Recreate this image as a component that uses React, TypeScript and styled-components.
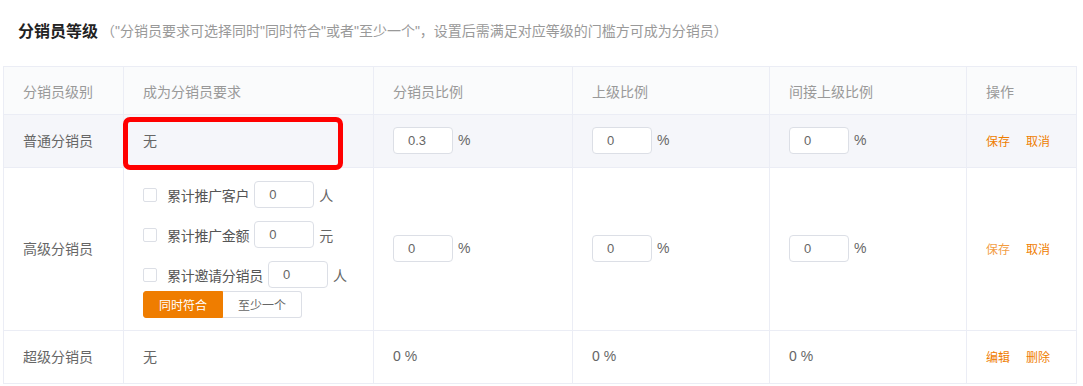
import styled, { createGlobalStyle } from 'styled-components'

const GlobalStyle = createGlobalStyle`
  body {
    margin: 0;
    background: #fff;
    font-family: "Liberation Sans", "Noto Sans CJK SC", sans-serif;
    color: #666;
  }
`

const ORANGE = '#ef7d00'

type Level = {
  name: string
  editing: boolean
  rate: string
  parent: string
  grand: string
  conditions?: { label: string; unit: string }[]
  saveDim?: boolean
}

const levels: Level[] = [
  { name: '普通分销员', editing: true, rate: '0.3', parent: '0', grand: '0' },
  {
    name: '高级分销员',
    editing: true,
    rate: '0',
    parent: '0',
    grand: '0',
    saveDim: true,
    conditions: [
      { label: '累计推广客户', unit: '人' },
      { label: '累计推广金额', unit: '元' },
      { label: '累计邀请分销员', unit: '人' },
    ],
  },
  { name: '超级分销员', editing: false, rate: '0', parent: '0', grand: '0' },
]

function Ratio({ value, editing }: { value: string; editing: boolean }) {
  if (!editing) return <span>{value} %</span>
  return (
    <RatioBox>
      <NumInput defaultValue={value} />
      <Unit>%</Unit>
    </RatioBox>
  )
}

export default function App() {
  return (
    <Page>
      <GlobalStyle />
      <Heading>
        <Title>分销员等级</Title>
        <Hint>（"分销员要求可选择同时"同时符合"或者"至少一个"，设置后需满足对应等级的门槛方可成为分销员）</Hint>
      </Heading>
      <TableWrap>
        <Table>
          <colgroup>
            <col style={{ width: 120 }} />
            <col style={{ width: 250 }} />
            <col style={{ width: 199 }} />
            <col style={{ width: 197 }} />
            <col style={{ width: 197 }} />
            <col />
          </colgroup>
          <thead>
            <HeadRow>
              <Th>分销员级别</Th>
              <Th>成为分销员要求</Th>
              <Th>分销员比例</Th>
              <Th>上级比例</Th>
              <Th>间接上级比例</Th>
              <Th>操作</Th>
            </HeadRow>
          </thead>
          <tbody>
            {levels.map((lv, i) => (
              <Row key={lv.name} $active={i === 0}>
                <Td>{lv.name}</Td>
                <Td $tall={!!lv.conditions}>
                  {lv.conditions ? (
                    <Conditions>
                      {lv.conditions.map((c) => (
                        <CondLine key={c.label}>
                          <Check type="checkbox" />
                          <CondLabel>{c.label}</CondLabel>
                          <NumInput defaultValue="0" />
                          <Unit>{c.unit}</Unit>
                        </CondLine>
                      ))}
                      <Toggle>
                        <ToggleBtn $on>同时符合</ToggleBtn>
                        <ToggleBtn>至少一个</ToggleBtn>
                      </Toggle>
                    </Conditions>
                  ) : (
                    '无'
                  )}
                </Td>
                <Td>
                  <Ratio value={lv.rate} editing={lv.editing} />
                </Td>
                <Td>
                  <Ratio value={lv.parent} editing={lv.editing} />
                </Td>
                <Td>
                  <Ratio value={lv.grand} editing={lv.editing} />
                </Td>
                <Td>
                  <Actions>
                    <Action $dim={lv.saveDim}>{lv.editing ? '保存' : '编辑'}</Action>
                    <Action>{lv.editing ? '取消' : '删除'}</Action>
                  </Actions>
                </Td>
              </Row>
            ))}
          </tbody>
        </Table>
        <Marker />
      </TableWrap>
    </Page>
  )
}

const Page = styled.div`
  padding: 0 6px 0 3px;
`
const Heading = styled.div`
  display: flex;
  align-items: center;
  height: 60px;
  padding-left: 15px;
  margin-bottom: 6px;
`
const Title = styled.h2`
  margin: 0;
  font-size: 16px;
  font-weight: 700;
  color: #222;
`
const Hint = styled.span`
  margin-left: 3px;
  font-size: 14px;
  color: #999;
`
const TableWrap = styled.div`
  position: relative;
  width: 1074px;
`
const Table = styled.table`
  width: 1074px;
  table-layout: fixed;
  border-collapse: collapse;
  font-size: 14px;
`
const HeadRow = styled.tr`
  height: 48px;
  background: #fafbfc;
`
const Th = styled.th`
  border: 1px solid #ebedf5;
  padding: 0 19px;
  text-align: left;
  font-weight: 400;
  color: #999;
`
const Row = styled.tr<{ $active?: boolean }>`
  height: 53px;
  background: ${(p) => (p.$active ? '#f5f6fa' : '#fff')};
`
const Td = styled.td<{ $tall?: boolean }>`
  border: 1px solid #ebedf5;
  padding: ${(p) => (p.$tall ? '13px 19px 12px' : '0 19px 2px')};
  vertical-align: middle;
  color: #666;
`
const RatioBox = styled.div`
  display: flex;
  align-items: center;
`
const NumInput = styled.input`
  box-sizing: border-box;
  width: 60px;
  height: 27px;
  padding: 0 0 0 14px;
  border: 1px solid #dcdfe6;
  border-radius: 4px;
  background: #fff;
  font: 13px "Liberation Sans", sans-serif;
  color: #666;
  outline: none;
`
const Unit = styled.span`
  margin-left: 5px;
  font-size: 14px;
  color: #666;
`
const Conditions = styled.div`
  display: flex;
  flex-direction: column;
  gap: 13px;
`
const CondLine = styled.div`
  display: flex;
  align-items: center;
  height: 27px;
`
const Check = styled.input`
  appearance: none;
  box-sizing: border-box;
  width: 14px;
  height: 14px;
  margin: 0 10px 0 0;
  border: 1px solid #dcdfe6;
  border-radius: 2px;
  background: #fff;
`
const CondLabel = styled.span`
  margin-right: 5px;
  font-size: 14px;
  letter-spacing: -0.3px;
  color: #555;
`
const Toggle = styled.div`
  display: flex;
  margin-top: -10px;
`
const ToggleBtn = styled.button<{ $on?: boolean }>`
  box-sizing: border-box;
  width: ${(p) => (p.$on ? '80px' : '79px')};
  height: 27px;
  padding: 0;
  font: 12px "Liberation Sans", "Noto Sans CJK SC", sans-serif;
  color: ${(p) => (p.$on ? '#fff' : '#666')};
  background: ${(p) => (p.$on ? ORANGE : '#fff')};
  border: 1px solid ${(p) => (p.$on ? ORANGE : '#dcdfe6')};
  border-radius: ${(p) => (p.$on ? '3px 0 0 3px' : '0 3px 3px 0')};
  ${(p) => !p.$on && 'border-left: none;'}
`
const Actions = styled.div`
  display: flex;
  gap: 16px;
`
const Action = styled.span<{ $dim?: boolean }>`
  font-size: 12px;
  color: ${ORANGE};
  opacity: ${(p) => (p.$dim ? 0.75 : 1)};
  cursor: pointer;
`
const Marker = styled.div`
  position: absolute;
  left: 120px;
  top: 51px;
  box-sizing: border-box;
  width: 220px;
  height: 53px;
  border: 5px solid #f00;
  border-radius: 7px;
  pointer-events: none;
`
